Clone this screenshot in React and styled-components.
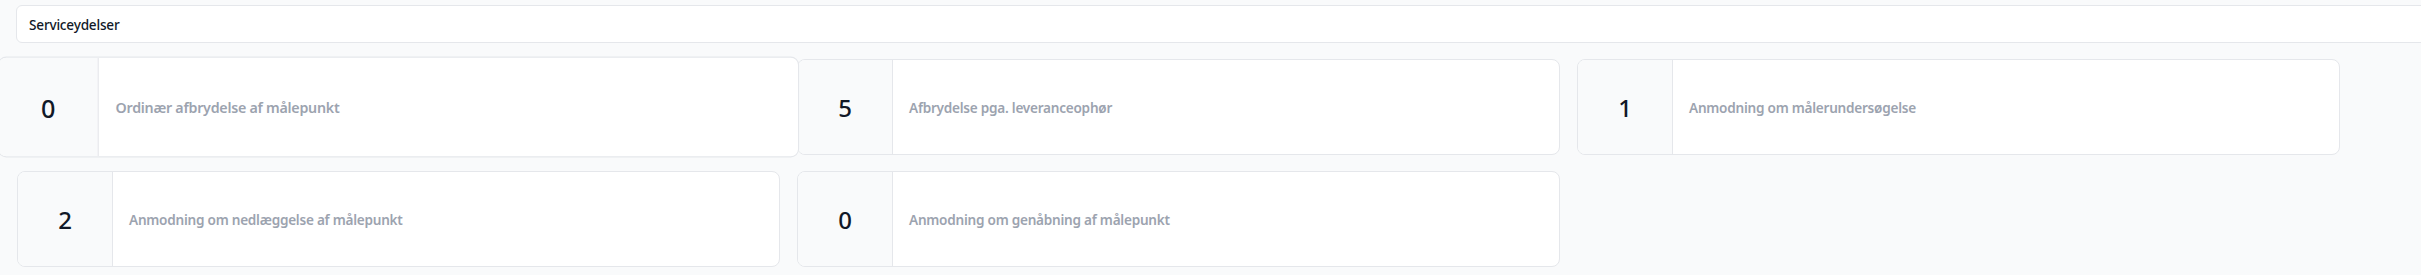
import React from "react";
import styled, { createGlobalStyle } from "styled-components";

const Global = createGlobalStyle`
  html, body {
    margin: 0;
    padding: 0;
    background: #f9fafb;
    overflow: hidden;
  }
  body {
    font-family: "Noto Sans", "Open Sans", sans-serif;
  }
  #root {
    min-height: 275px;
    background: #f9fafb;
  }
`;

const Page = styled.div`
  display: flex;
  flex-direction: column;
  gap: 16px;
  padding-top: 5px;
  width: 2421px;
`;

const SectionHeader = styled.div`
  box-sizing: border-box;
  margin-left: 16px;
  width: 2500px;
  height: 38px;
  display: flex;
  align-items: center;
  padding: 0 12px;
  background: #ffffff;
  border: 1px solid #e5e7eb;
  border-radius: 6px;
  font-size: 13.6px;
  letter-spacing: -0.2px;
  font-weight: 500;
  color: #111827;
`;

const Grid = styled.div`
  display: grid;
  grid-template-columns: repeat(3, 763px);
  column-gap: 17px;
  row-gap: 16px;
  padding-left: 17px;
`;

const Card = styled.div`
  box-sizing: border-box;
  height: 96px;
  display: flex;
  background: #ffffff;
  border: 1px solid #e5e7eb;
  border-radius: 8px;
  overflow: hidden;
  transform: ${(p) => (p.$hovered ? "scale(1.05)" : "none")};
  transform-origin: center;
`;

const Count = styled.div`
  box-sizing: border-box;
  flex: 0 0 95px;
  display: flex;
  align-items: center;
  justify-content: center;
  background: #f9fafb;
  border-right: 1px solid #e5e7eb;
  font-size: 24px;
  font-weight: 500;
  color: #111827;
`;

const Label = styled.div`
  flex: 1;
  display: flex;
  align-items: center;
  padding-left: 16px;
  font-size: 13.6px;
  letter-spacing: -0.25px;
  font-weight: 600;
  color: #9ca3af;
`;

const items = [
  { count: 0, label: "Ordinær afbrydelse af målepunkt", hovered: true },
  { count: 5, label: "Afbrydelse pga. leveranceophør" },
  { count: 1, label: "Anmodning om målerundersøgelse" },
  { count: 2, label: "Anmodning om nedlæggelse af målepunkt" },
  { count: 0, label: "Anmodning om genåbning af målepunkt" },
];

export default function App() {
  return (
    <>
      <Global />
      <Page>
        <SectionHeader>Serviceydelser</SectionHeader>
        <Grid>
          {items.map((it, i) => (
            <Card key={i} $hovered={it.hovered}>
              <Count>{it.count}</Count>
              <Label>{it.label}</Label>
            </Card>
          ))}
        </Grid>
      </Page>
    </>
  );
}
